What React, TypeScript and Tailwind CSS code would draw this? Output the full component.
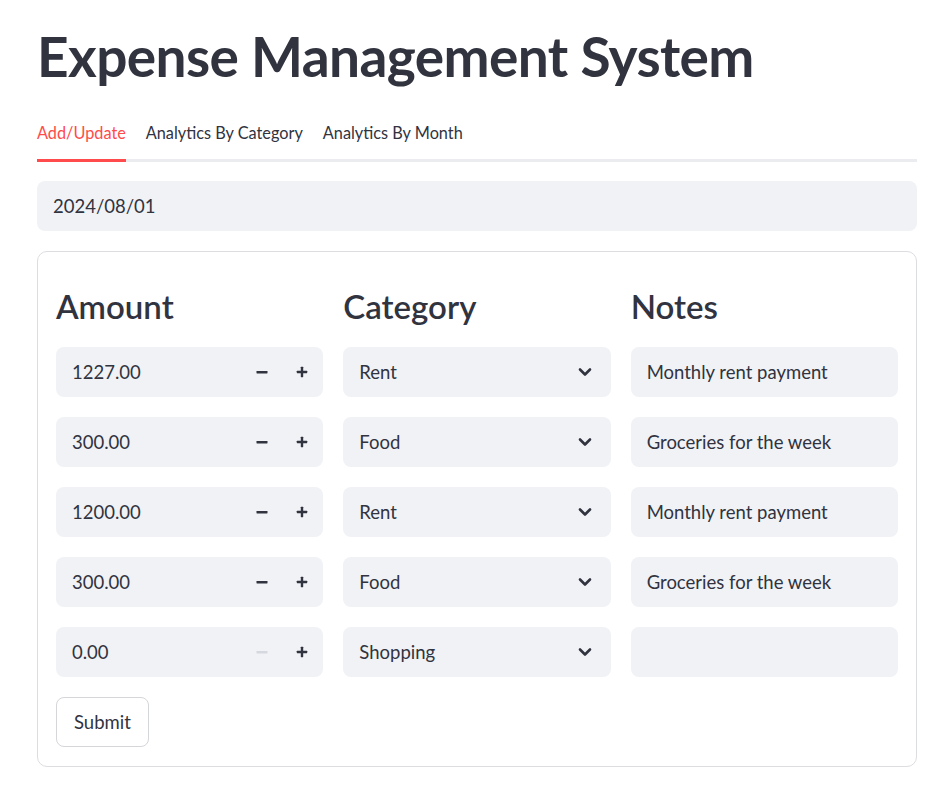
import React from "react";

const rows = [
  { amount: "1227.00", category: "Rent", notes: "Monthly rent payment", minusDisabled: false },
  { amount: "300.00", category: "Food", notes: "Groceries for the week", minusDisabled: false },
  { amount: "1200.00", category: "Rent", notes: "Monthly rent payment", minusDisabled: false },
  { amount: "300.00", category: "Food", notes: "Groceries for the week", minusDisabled: false },
  { amount: "0.00", category: "Shopping", notes: "", minusDisabled: true },
];

function Minus({ disabled }: { disabled: boolean }) {
  return (
    <svg width="12" height="12" viewBox="0 0 12 12">
      <rect x="0.5" y="5" width="11" height="2.4" rx="0.4" fill={disabled ? "#d5d8de" : "#31333f"} />
    </svg>
  );
}

function Plus() {
  return (
    <svg width="12" height="12" viewBox="0 0 12 12">
      <rect x="0.8" y="4.8" width="10.4" height="2.4" rx="0.4" fill="#31333f" />
      <rect x="4.8" y="0.8" width="2.4" height="10.4" rx="0.4" fill="#31333f" />
    </svg>
  );
}

function Chevron() {
  return (
    <svg width="14" height="10" viewBox="0 0 14 10">
      <path d="M2 2.5 L7 7.5 L12 2.5" fill="none" stroke="#31333f" strokeWidth="2.6" strokeLinecap="round" strokeLinejoin="round" />
    </svg>
  );
}

export default function App() {
  return (
    <div className="min-h-[807px] bg-white text-[#31333f]" style={{ fontFamily: "Lato, 'Noto Sans', sans-serif" }}>
      <div className="w-[880px] ml-[37px] pt-[20px] flex flex-col">
        <h1 className="text-[55px] font-bold leading-[72px] tracking-[-0.6px] text-[#31333f]">
          Expense Management System
        </h1>

        <div className="mt-[29px] relative">
          <div className="flex gap-[20px] text-[16.3px] leading-[24px]">
            <div className="flex flex-col">
              <span className="text-[#ff4b4b] pb-[14px]">Add/Update</span>
              <div className="h-[3px] bg-[#ff4b4b] relative z-10" />
            </div>
            <div className="pb-[17px]">Analytics By Category</div>
            <div className="pb-[17px]">Analytics By Month</div>
          </div>
          <div className="absolute left-0 right-0 bottom-0 h-[3px] bg-[#ebecef]" />
        </div>

        <div className="mt-[19px] h-[50px] rounded-[8px] bg-[#f0f2f6] flex items-center px-[16px] pt-[1px] text-[18.5px]">
          2024/08/01
        </div>

        <div className="mt-[20px] border border-[#dcdde1] rounded-[10px] px-[18px] pt-[32px] pb-[19px] flex flex-col">
          <div className="grid grid-cols-3 gap-x-[20px]">
            <h3 className="text-[33px] font-semibold leading-[44px]">Amount</h3>
            <h3 className="text-[33px] font-semibold leading-[44px]">Category</h3>
            <h3 className="text-[33px] font-semibold leading-[44px]">Notes</h3>
          </div>
          <div className="mt-[19px] grid grid-cols-3 gap-x-[20px] gap-y-[20px]">
            {rows.map((r, i) => (
              <React.Fragment key={i}>
                <div className="h-[50px] rounded-[8px] bg-[#f0f2f6] flex items-center pl-[16px] pr-[1px] text-[18.5px]">
                  <span className="flex-1 pt-[1px]">{r.amount}</span>
                  <span className="w-[40px] h-[50px] flex items-center justify-center">
                    <Minus disabled={r.minusDisabled} />
                  </span>
                  <span className="w-[40px] h-[50px] flex items-center justify-center">
                    <Plus />
                  </span>
                </div>
                <div className="h-[50px] rounded-[8px] bg-[#f0f2f6] flex items-center pl-[16px] pr-[19px] text-[18.5px]">
                  <span className="flex-1 pt-[1px]">{r.category}</span>
                  <Chevron />
                </div>
                <div className="h-[50px] rounded-[8px] bg-[#f0f2f6] flex items-center px-[16px] pt-[1px] text-[18.5px]">
                  {r.notes}
                </div>
              </React.Fragment>
            ))}
          </div>
          <div className="mt-[20px]">
            <button className="h-[50px] px-[17px] pt-[1px] rounded-[8px] border border-[#d5d6da] bg-white text-[18.5px] text-[#31333f]">
              Submit
            </button>
          </div>
        </div>
      </div>
    </div>
  );
}
